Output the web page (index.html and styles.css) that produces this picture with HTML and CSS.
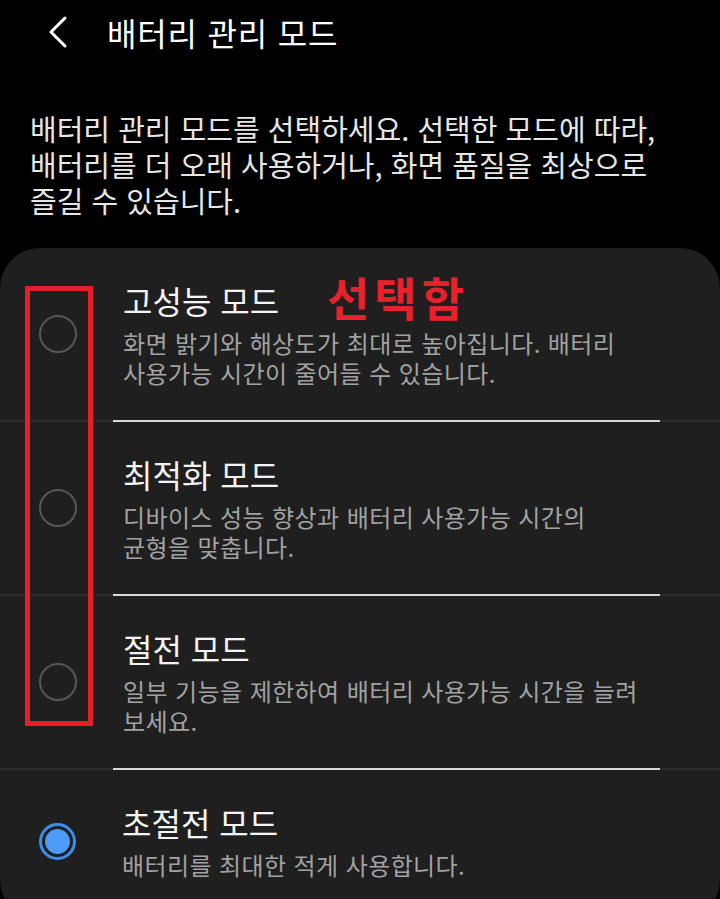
FILE: index.html
```html
<!DOCTYPE html>
<html lang="ko">
<head>
  <meta charset="UTF-8" />
  <meta name="viewport" content="width=device-width, initial-scale=1.0"/>
  <title>배터리 관리 모드</title>
  <link rel="stylesheet" href="styles.css">
</head>
<body>
  <div class="header">
    <div class="back-arrow">
      <svg width="24" height="34" viewBox="0 0 24 34">
        <polyline points="18,3 4,17 18,31" fill="none" stroke="#fff" stroke-width="3" stroke-linecap="round" stroke-linejoin="round"/>
      </svg>
    </div>
    <h1>배터리 관리 모드</h1>
  </div>

  <p class="intro">배터리 관리 모드를 선택하세요. 선택한 모드에 따라, 배터리를 더 오래 사용하거나, 화면 품질을 최상으로 즐길 수 있습니다.</p>

  <div class="card">
    <!-- 모드 목록 -->
    <div class="mode-row">
      <span class="radio"></span>
      <div class="mode-text">
        <div class="mode-title">고성능 모드</div>
        <div class="mode-desc">화면 밝기와 해상도가 최대로 높아집니다. 배터리 사용가능 시간이 줄어들 수 있습니다.</div>
      </div>
    </div>
    <div class="divider"></div>

    <div class="mode-row">
      <span class="radio"></span>
      <div class="mode-text">
        <div class="mode-title">최적화 모드</div>
        <div class="mode-desc">디바이스 성능 향상과 배터리 사용가능 시간의 균형을 맞춥니다.</div>
      </div>
    </div>
    <div class="divider"></div>

    <div class="mode-row">
      <span class="radio"></span>
      <div class="mode-text">
        <div class="mode-title">절전 모드</div>
        <div class="mode-desc">일부 기능을 제한하여 배터리 사용가능 시간을 늘려 보세요.</div>
      </div>
    </div>
    <div class="divider"></div>

    <div class="mode-row">
      <span class="radio checked"></span>
      <div class="mode-text">
        <div class="mode-title">초절전 모드</div>
        <div class="mode-desc">배터리를 최대한 적게 사용합니다.</div>
      </div>
    </div>

    <!-- 표시용 박스 -->
    <div class="mark-box"></div>
    <div class="mark-label">선택함</div>
  </div>
</body>
</html>
```

FILE: styles.css
```css
body {
  margin: 0;
  font-family: "Noto Sans CJK KR", "Noto Sans", sans-serif;
  background-color: #000;
  color: #f2f2f2;
  word-break: keep-all;
}

.header {
  height: 64px;
  display: flex;
  align-items: center;
  padding-left: 47px;
}

.back-arrow {
  width: 24px;
  height: 34px;
}

.header h1 {
  margin: 0 0 0 36px;
  font-size: 32px;
  font-weight: 400;
  letter-spacing: 0.8px;
  color: #fff;
}

.intro {
  margin: 46px 0 30px;
  padding: 0 30px;
  font-size: 29px;
  line-height: 36px;
  color: #e6e6e6;
}

.card {
  position: relative;
  background-color: #1f1f1f;
  border-radius: 40px;
  padding-bottom: 8px;
}

.mode-row {
  display: flex;
  align-items: center;
  padding: 32px 60px 32px 39px;
}

.radio {
  flex: none;
  width: 38px;
  height: 38px;
  border: 2px solid #575757;
  border-radius: 50%;
  box-sizing: border-box;
  margin-right: 46px;
}

.radio.checked {
  width: 37px;
  height: 37px;
  border: 3px solid #3c8ded;
  padding: 3px;
  background-color: #4b9bf7;
  background-clip: content-box;
}

.mode-text {
  flex: 1;
}

.mode-title {
  font-size: 32px;
  line-height: 40px;
  color: #f4f4f4;
}

.mode-desc {
  margin-top: 8px;
  font-size: 24px;
  line-height: 30px;
  letter-spacing: 0.4px;
  color: #a2a2a2;
}

.divider {
  height: 2px;
  background-color: #2a2a2a;
}

.divider::after {
  content: "";
  display: block;
  height: 2px;
  margin: 0 60px 0 113px;
  background-color: #d8d8d8;
}

.mark-box {
  position: absolute;
  left: 25px;
  top: 38px;
  width: 68px;
  height: 440px;
  border: 5px solid #e3202a;
  box-sizing: border-box;
}

.mark-label {
  position: absolute;
  left: 327px;
  top: 23px;
  font-size: 46px;
  line-height: 50px;
  font-weight: bold;
  letter-spacing: 5px;
  color: #e8222b;
}
```
